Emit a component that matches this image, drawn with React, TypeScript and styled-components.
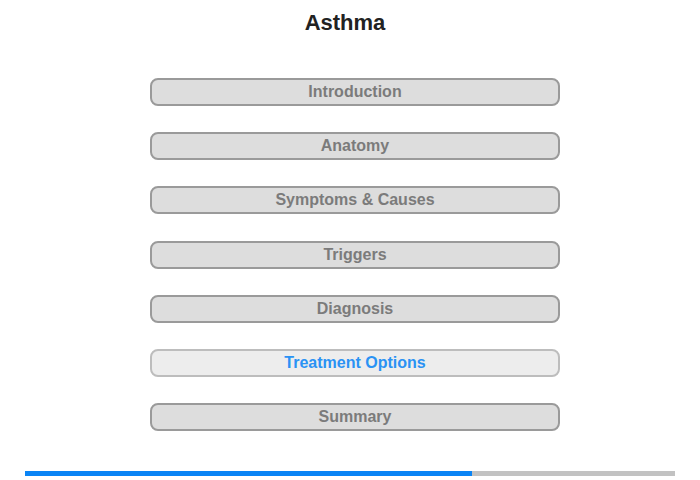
import React from "react";
import styled, { createGlobalStyle } from "styled-components";

const GlobalStyle = createGlobalStyle`
  body {
    margin: 0;
    background: #fff;
    font-family: "Liberation Sans", Arial, sans-serif;
  }
`;

const Page = styled.div`
  width: 700px;
  height: 480px;
  display: flex;
  flex-direction: column;
`;

const Title = styled.h1`
  width: 690px;
  margin: 10px 0 0;
  text-align: center;
  font-size: 22px;
  line-height: 25px;
  font-weight: bold;
  color: #222;
`;

const Menu = styled.nav`
  display: flex;
  flex-direction: column;
  gap: 26.2px;
  padding-left: 150px;
  margin-top: 43px;
`;

const MenuButton = styled.button<{ $active?: boolean }>`
  width: 410px;
  height: 28px;
  box-sizing: border-box;
  border-radius: 8px;
  border: 2px solid ${(p) => (p.$active ? "#bdbdbd" : "#9a9a9a")};
  background: ${(p) => (p.$active ? "#ededed" : "#dddddd")};
  color: ${(p) => (p.$active ? "#2a92f4" : "#7b7b7b")};
  font-family: "Liberation Sans", Arial, sans-serif;
  font-size: 16px;
  font-weight: bold;
  padding: 0;
  cursor: pointer;
`;

const Progress = styled.div`
  display: flex;
  margin: 39.8px 0 0 25px;
  width: 650px;
  height: 5px;
`;

const Filled = styled.div`
  background: #0a84f5;
`;

const Rest = styled.div`
  flex: 1;
  background: #c2c2c2;
`;

const items = [
  "Introduction",
  "Anatomy",
  "Symptoms & Causes",
  "Triggers",
  "Diagnosis",
  "Treatment Options",
  "Summary",
];

export default function App() {
  const active = 5;
  return (
    <Page>
      <GlobalStyle />
      <Title>Asthma</Title>
      <Menu>
        {items.map((label, i) => (
          <MenuButton key={label} $active={i === active}>
            {label}
          </MenuButton>
        ))}
      </Menu>
      <Progress>
        <Filled style={{ width: `${(447 / 650) * 100}%` }} />
        <Rest />
      </Progress>
    </Page>
  );
}
